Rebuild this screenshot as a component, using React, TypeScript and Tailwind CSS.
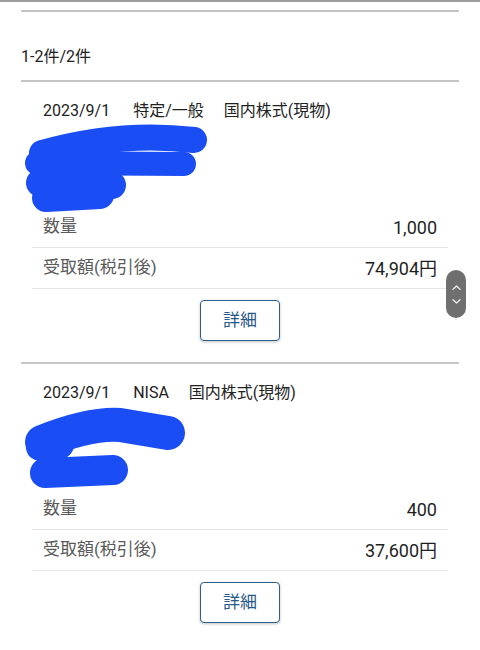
import React from 'react'

// Redaction scribbles, drawn in page coordinates
const scribbles: Record<string, { d: string; w: number }[]> = {
  first: [
    { d: 'M 42 152 Q 120 130 194 139', w: 26 },
    { d: 'M 37 162 L 184 163', w: 24 },
    { d: 'M 40 182 L 112 184', w: 28 },
    { d: 'M 46 197 L 100 194', w: 28 },
  ],
  second: [
    { d: 'M 42 443 Q 90 424 120 426 L 168 434', w: 34 },
    { d: 'M 40 448 L 60 446', w: 28 },
    { d: 'M 45 474 L 113 471', w: 30 },
  ],
}

function Scribble({ kind, top }: { kind: 'first' | 'second'; top: number }) {
  return (
    <svg
      className="absolute left-0 top-0 overflow-visible"
      width="200"
      height="85"
      viewBox="0 0 200 85"
    >
      <g transform={`translate(-32 ${-top})`}>
        {scribbles[kind].map((s, i) => (
          <path
            key={i}
            d={s.d}
            fill="none"
            stroke="#1a4ef4"
            strokeWidth={s.w}
            strokeLinecap="round"
            strokeLinejoin="round"
          />
        ))}
      </g>
    </svg>
  )
}

interface Dividend {
  date: string
  account: string
  kind: string
  qty: string
  amount: string
  scribble: 'first' | 'second'
  top: number
}

const items: Dividend[] = [
  { date: '2023/9/1', account: '特定/一般', kind: '国内株式(現物)', qty: '1,000', amount: '74,904円', scribble: 'first', top: 122 },
  { date: '2023/9/1', account: 'NISA', kind: '国内株式(現物)', qty: '400', amount: '37,600円', scribble: 'second', top: 406 },
]

function Row({ label, value }: { label: string; value: string }) {
  return (
    <div className="flex h-[41px] items-center justify-between border-b border-[#e5e5e5] px-[11px]">
      <span className="text-[17px] text-[#5a5a5a]">{label}</span>
      <span className="text-[18px] text-[#1f1f1f]">{value}</span>
    </div>
  )
}

function Card({ item, last }: { item: Dividend; last?: boolean }) {
  return (
    <div>
      <div className="px-[11px] pt-[17px]">
        <div className="flex px-[11px] text-[16px] leading-6 text-[#222]">
          <span className="mr-[23px]">{item.date}</span>
          <span className="mr-[20px]">{item.account}</span>
          <span>{item.kind}</span>
        </div>
        <div className="relative h-[84px]">
          <Scribble kind={item.scribble} top={item.top} />
        </div>
        <Row label="数量" value={item.qty} />
        <Row label="受取額(税引後)" value={item.amount} />
      </div>
      <div className="flex justify-center pt-[11px] pb-[21px]">
        <button className="h-[41px] w-[80px] rounded-[4px] border border-[#2f5f8e] bg-white text-[17px] text-[#27588a] shadow-[0_1px_3px_rgba(0,0,0,0.25)]">
          詳細
        </button>
      </div>
      {!last && <div className="h-[2px] bg-[#c6c6c6]" />}
    </div>
  )
}

export default function App() {
  return (
    <div
      className="relative h-[650px] w-full overflow-hidden bg-white"
      style={{ fontFamily: 'Roboto, "Noto Sans CJK JP", sans-serif' }}
    >
      <div className="h-[2px] bg-[#9c9c9c]" />
      <div className="px-[21px]">
        <div className="mt-[8px] h-[2px] bg-[#c4c4c4]" />
        <div className="pt-[33px] pb-[11px] text-[16px] leading-6 text-[#222]">1-2件/2件</div>
        <div className="h-[2px] bg-[#c4c4c4]" />
        {items.map((item, i) => (
          <Card key={i} item={item} last={i === items.length - 1} />
        ))}
      </div>

      {/* floating scroll handle */}
      <div className="absolute left-[446px] top-[270px] flex h-[48px] w-[20px] flex-col items-center justify-center gap-[9px] rounded-full bg-[#6f6f6f]">
        <svg width="9" height="5" viewBox="0 0 9 5">
          <path d="M1 4.2 L4.5 1 L8 4.2" fill="none" stroke="#ececec" strokeWidth="1.3" strokeLinecap="round" strokeLinejoin="round" />
        </svg>
        <svg width="9" height="5" viewBox="0 0 9 5">
          <path d="M1 0.8 L4.5 4 L8 0.8" fill="none" stroke="#ececec" strokeWidth="1.3" strokeLinecap="round" strokeLinejoin="round" />
        </svg>
      </div>
    </div>
  )
}
